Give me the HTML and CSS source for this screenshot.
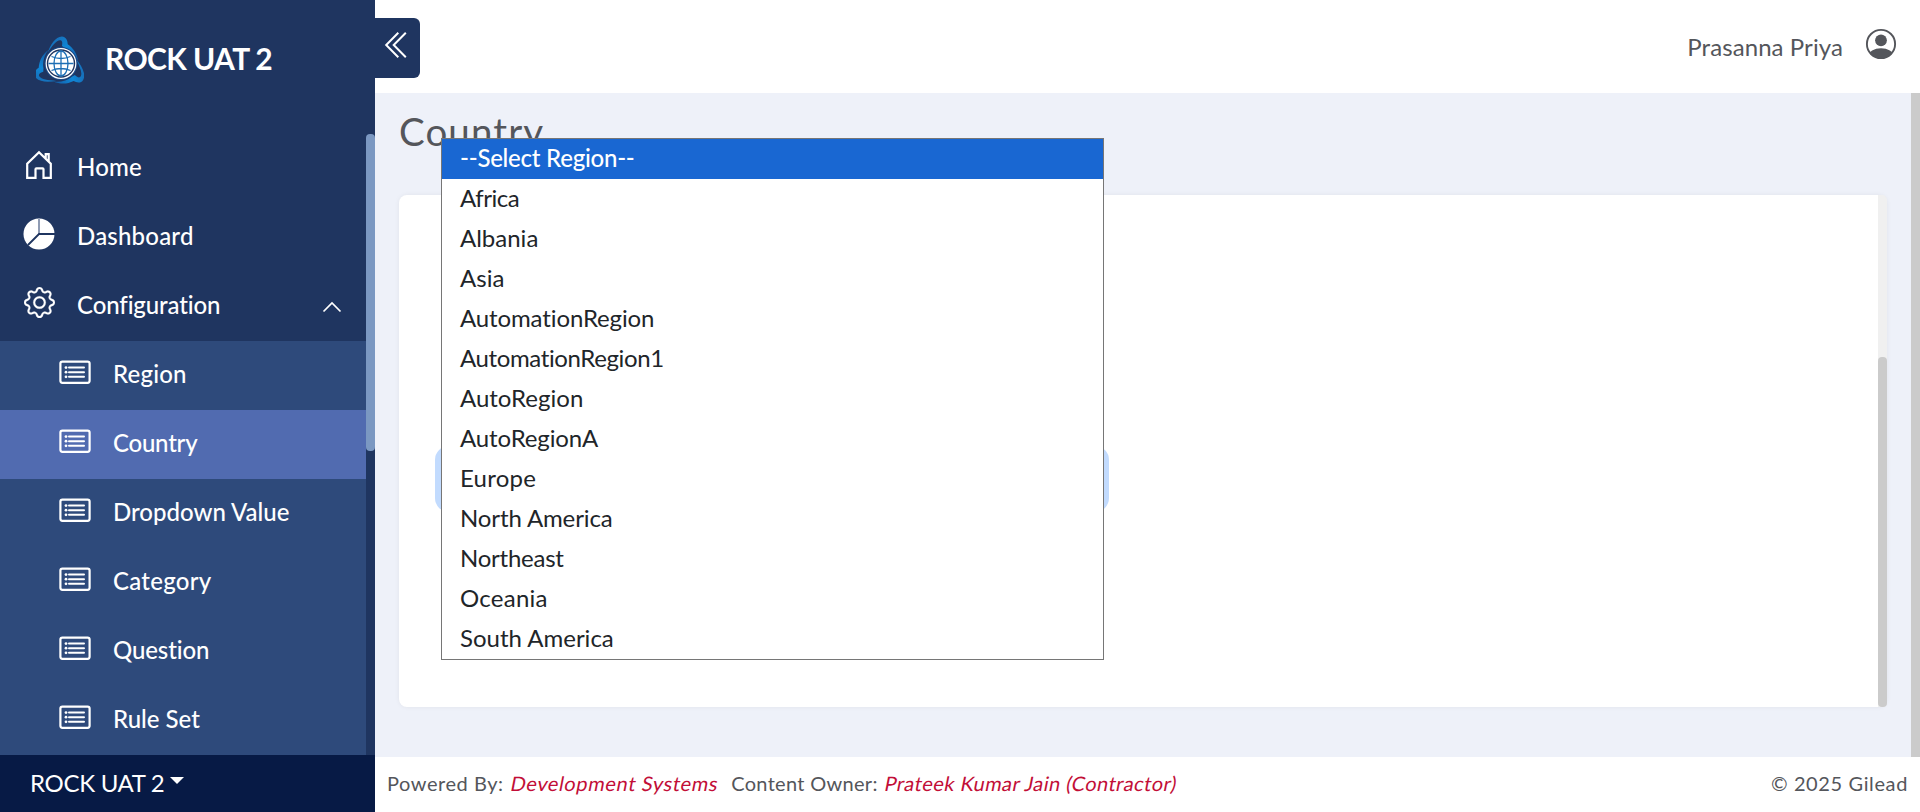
FILE: index.html
```html
<!DOCTYPE html>
<html lang="en">
<head>
<meta charset="utf-8">
<title>ROCK UAT 2 - Country</title>
<link rel="stylesheet" href="styles.css">
</head>
<body>
<svg width="0" height="0" class="sprite" aria-hidden="true">
  <symbol id="list" viewBox="0 0 32 24">
    <rect x="1.4" y="1.6" width="29.2" height="21.2" rx="2" fill="none" stroke="currentColor" stroke-width="2.2"/>
    <path d="M10 7.6h15M10 12.2h15M10 16.8h15" stroke="currentColor" stroke-width="2" stroke-linecap="round"/>
    <g fill="currentColor"><circle cx="7" cy="7.6" r="1.4"/><circle cx="7" cy="12.2" r="1.4"/><circle cx="7" cy="16.8" r="1.4"/></g>
  </symbol>
</svg>
<div class="app">
  <aside class="sidebar">
    <div class="brand">
      <svg class="brand-logo" viewBox="0 0 48 48">
        <defs>
          <linearGradient id="ga" x1="0" y1="0" x2="1" y2="1"><stop offset="0" stop-color="#1b62a8"/><stop offset=".5" stop-color="#0f86d6"/><stop offset="1" stop-color="#1558a0"/></linearGradient>
          <path id="blade" d="M12 17C15 9 20 0 27 0c4 0 6 4 6 8 6 4 10 10 11 18-3-7-8-12-14-14l-3-2c1-4 0-6-2-6-4 0-8 6-13 13z" fill="url(#ga)"/>
        </defs>
        <g transform="translate(0 .5) scale(.96)">
          <use href="#blade"/>
          <use href="#blade" transform="rotate(120 25 29)"/>
          <use href="#blade" transform="rotate(240 25 29)"/>
        </g>
        <circle cx="25" cy="27.500" r="16.500" fill="#1c4b8a"/>
        <circle cx="25" cy="27.500" r="14.800" fill="#1f3560" stroke="#fff" stroke-width="1.200"/>
        <circle cx="25" cy="27.500" r="12.800" fill="#fff"/>
        <g fill="none" stroke="#1d6fb5" stroke-width="1.300"><path d="M25 15v25M12.500 27.500h25M15.500 20.500q9.500 4 19 0M15.500 34.500q9.500-4 19 0"/><ellipse cx="25" cy="27.500" rx="7" ry="12.500"/></g>
      </svg>
      <span class="brand-name">ROCK UAT 2</span>
    </div>
    <div class="nav-scroll">
      <nav class="nav">
        <a class="nav-item">
          <svg class="nav-icon" viewBox="0 0 32 32" fill="none" stroke="#fff" stroke-width="2.200"><path d="M4.200 28.900V14.800L16 3.200l11.800 11.600v14.100h-7.300v-8.600q0-.9-.9-.9h-6.200q-.9 0-.9.900v8.600zM22.700 9.500V5.100h3v7.400"/></svg>
          <span class="wide">Home</span>
        </a>
        <a class="nav-item">
          <svg class="nav-icon" viewBox="0 0 32 32"><circle cx="16" cy="16" r="15.500" fill="#fff"/><path d="M16 0v16" stroke="#8f9bb3" stroke-width="2"/><path d="M15.500 16H32M16 16L5 27" stroke="#1f3560" stroke-width="1.800"/></svg>
          <span class="wide">Dashboard</span>
        </a>
        <a class="nav-item">
          <svg class="nav-icon gear" viewBox="0 0 16 16" fill="#fff" stroke="#fff" stroke-width=".12"><path d="M8 4.754a3.246 3.246 0 1 0 0 6.492 3.246 3.246 0 0 0 0-6.492zM5.754 8a2.246 2.246 0 1 1 4.492 0 2.246 2.246 0 0 1-4.492 0z"/><path d="M9.796 1.343c-.527-1.790-3.065-1.790-3.592 0l-.094.319a.873.873 0 0 1-1.255.520l-.292-.160c-1.640-.892-3.433.902-2.540 2.541l.159.292a.873.873 0 0 1-.520 1.255l-.319.094c-1.790.527-1.790 3.065 0 3.592l.319.094a.873.873 0 0 1 .520 1.255l-.160.292c-.892 1.640.901 3.434 2.541 2.540l.292-.159a.873.873 0 0 1 1.255.520l.094.319c.527 1.790 3.065 1.790 3.592 0l.094-.319a.873.873 0 0 1 1.255-.520l.292.160c1.640.893 3.434-.902 2.540-2.541l-.159-.292a.873.873 0 0 1 .520-1.255l.319-.094c1.790-.527 1.790-3.065 0-3.592l-.319-.094a.873.873 0 0 1-.520-1.255l.160-.292c.893-1.640-.902-3.433-2.541-2.540l-.292.159a.873.873 0 0 1-1.255-.520l-.094-.319zm-2.633.283c.246-.835 1.428-.835 1.674 0l.094.319a1.873 1.873 0 0 0 2.693 1.115l.291-.160c.764-.415 1.600.420 1.184 1.185l-.159.292a1.873 1.873 0 0 0 1.116 2.692l.318.094c.835.246.835 1.428 0 1.674l-.319.094a1.873 1.873 0 0 0-1.115 2.693l.160.291c.415.764-.420 1.600-1.185 1.184l-.291-.159a1.873 1.873 0 0 0-2.693 1.116l-.094.318c-.246.835-1.428.835-1.674 0l-.094-.319a1.873 1.873 0 0 0-2.692-1.115l-.292.160c-.764.415-1.600-.420-1.184-1.185l.159-.291A1.873 1.873 0 0 0 1.945 8.930l-.319-.094c-.835-.246-.835-1.428 0-1.674l.319-.094A1.873 1.873 0 0 0 3.060 4.377l-.160-.292c-.415-.764.420-1.600 1.185-1.184l.292.159a1.873 1.873 0 0 0 2.692-1.115l.094-.319z"/></svg>
          <span class="even">Configuration</span>
          <svg class="chevron" viewBox="0 0 20 12" fill="none" stroke="#fff" stroke-width="1.700"><path d="M1.500 10.500L10 2l8.500 8.500"/></svg>
        </a>
        <div class="subnav">
          <a class="nav-item sub"><svg class="list-icon"><use href="#list"/></svg><span class="wide">Region</span></a>
          <a class="nav-item sub active"><svg class="list-icon"><use href="#list"/></svg><span class="snug">Country</span></a>
          <a class="nav-item sub"><svg class="list-icon"><use href="#list"/></svg><span>Dropdown Value</span></a>
          <a class="nav-item sub"><svg class="list-icon"><use href="#list"/></svg><span class="slight">Category</span></a>
          <a class="nav-item sub"><svg class="list-icon"><use href="#list"/></svg><span class="even">Question</span></a>
          <a class="nav-item sub"><svg class="list-icon"><use href="#list"/></svg><span>Rule Set</span></a>
        </div>
      </nav>
      <div class="nav-track"><div class="nav-thumb"></div></div>
    </div>
    <div class="side-footer"><span>ROCK UAT 2</span><i class="caret"></i></div>
  </aside>
  <div class="main">
    <header class="topbar">
      <button class="toggle" aria-label="Collapse menu"><svg viewBox="0 0 24 28" fill="none" stroke="#fff" stroke-width="2"><path d="M14.300 1.800L2.200 14l12.100 12.200M21.800 1.800L9.700 14l12.100 12.200"/></svg></button>
      <div class="user">
        <span class="user-name">Prasanna Priya</span>
        <svg class="avatar" viewBox="0 0 32 32"><defs><clipPath id="disc"><circle cx="16" cy="16" r="14.500"/></clipPath></defs><circle cx="16" cy="16" r="14.100" fill="#fff" stroke="#54565b" stroke-width="1.900"/><circle cx="16" cy="12.300" r="5.900" fill="#54565b"/><ellipse cx="16" cy="28" rx="12.500" ry="7.800" fill="#54565b" clip-path="url(#disc)"/></svg>
      </div>
    </header>
    <div class="content-row">
      <main class="content">
        <h1 class="title">Country</h1>
        <section class="card">
          <div class="card-body">
            <div class="select">
              <ul class="menu">
                <li class="selected snug">--Select Region--</li>
                <li class="tight">Africa</li>
                <li>Albania</li>
                <li>Asia</li>
                <li class="even">AutomationRegion</li>
                <li class="fit">AutomationRegion1</li>
                <li>AutoRegion</li>
                <li class="even">AutoRegionA</li>
                <li class="slight">Europe</li>
                <li class="even">North America</li>
                <li class="snug">Northeast</li>
                <li class="slight">Oceania</li>
                <li>South America</li>
              </ul>
            </div>
          </div>
          <div class="card-track"><div class="card-thumb"></div></div>
        </section>
      </main>
      <div class="page-scroll"></div>
    </div>
    <footer class="footer">
      <div class="credits"><span>Powered By:</span><em class="dev">Development Systems</em><span class="owner">Content Owner:</span><em>Prateek Kumar Jain (Contractor)</em></div>
      <span class="copyright">© 2025 Gilead</span>
    </footer>
  </div>
</div>
</body>
</html>
```
FILE: styles.css
```css
* { box-sizing: border-box; }
body {
  margin: 0;
  font-family: Lato, "Liberation Sans", sans-serif;
  font-size: 24px;
  color: #54565b;
  font-variant-ligatures: none;
}
.sprite { display: none; }
.app { display: flex; height: 812px; overflow: hidden; }

/* letter fitting */
.wide { letter-spacing: .2px; }
.slight { letter-spacing: .25px; }
.even { letter-spacing: -.12px; }
.snug { letter-spacing: -.24px; }
.fit { letter-spacing: -.38px; }
.tight { letter-spacing: -.48px; }

/* sidebar */
.sidebar { width: 375px; flex: none; display: flex; flex-direction: column; background: #1f3560; color: #fff; }
.brand { height: 134px; display: flex; align-items: flex-start; padding: 36px 0 0 36px; gap: 21px; }
.brand-logo { width: 48px; height: 48px; }
.brand-name { font-size: 30px; font-weight: 700; line-height: 44px; letter-spacing: -.6px; }
.nav-scroll { height: 621px; display: flex; overflow: hidden; }
.nav { width: 366px; }
.nav-item { height: 69px; display: flex; align-items: center; padding: 0 24px 4px 23px; font-weight: 500; }
.nav-icon { width: 32px; height: 32px; flex: none; margin: -4px 22px 0 0; }
.gear { width: 31px; height: 31px; margin-left: .5px; margin-right: 22.5px; }
.chevron { width: 20px; height: 12px; margin: 5px 0 0 auto; }
.subnav { background: #2e4a7b; }
.sub { padding-left: 59px; }
.list-icon { width: 32px; height: 24px; margin: -4px 22px 0 0; }
.active { background: #516bb0; }
.nav-track { width: 9px; background: #1f3560; }
.nav-thumb { height: 317px; background: #7b98c2; border-radius: 4px; }
.side-footer { height: 57px; display: flex; align-items: center; gap: 5px; padding: 0 0 2px 30px; background: #071a45; letter-spacing: -.3px; }
.caret { border: 7px solid transparent; border-top-color: #fff; border-bottom: 0; margin-top: -4px; }

/* main column */
.main { flex: 1; display: flex; flex-direction: column; min-width: 0; }
.topbar { height: 93px; display: flex; justify-content: space-between; align-items: flex-start; background: #fff; }
.toggle { display: flex; align-items: flex-start; width: 45px; height: 60px; margin-top: 18px; padding: 13px 0 0 9px; border: 0; border-radius: 0 6px 6px 0; background: #1f3560; }
.toggle svg { flex: none; width: 24px; height: 28px; }
.user { display: flex; padding: 28px 23px 0 0; }
.user-name { line-height: 37px; letter-spacing: .08px; margin-right: 22px; }
.avatar { width: 32px; height: 32px; }
.content-row { height: 664px; display: flex; background: #eef1f9; }
.content { flex: 1; padding: 20px 24px 50px; display: flex; flex-direction: column; }
.page-scroll { width: 9px; background: #cbcbcb; }
.title { margin: 0; height: 82px; font-size: 38.5px; font-weight: 400; line-height: 37px; letter-spacing: 1.1px; }
.card { height: 512px; display: flex; background: #fff; border-radius: 8px; box-shadow: 0 0 5px rgba(0, 0, 0, .06); }
.card-body { flex: 1; padding: 257px 42px 0; }
.select { position: relative; width: 662px; height: 54px; border-radius: 8px; background: #fff; box-shadow: 0 0 0 6px #c2dbfe; }
.menu { position: absolute; left: 0; top: -314px; width: 663px; height: 522px; margin: 0; padding: 0; list-style: none; background: #fff; border: 1px solid #767676; color: #212529; }
.menu li { height: 40px; line-height: 37px; padding-left: 18px; }
.menu .selected { background: #1967d2; color: #fff; font-weight: 500; }
.card-track { width: 9px; background: #f0f0f0; border-radius: 0 5px 5px 0; padding-top: 162px; }
.card-thumb { height: 350px; background: #cbcbcb; border-radius: 4px; }

/* footer */
.footer { height: 55px; display: flex; justify-content: space-between; align-items: center; padding: 0 12px 4px; background: #fff; font-size: 20px; line-height: 24px; letter-spacing: .55px; }
.credits { display: flex; }
.credits em { color: #c20e37; margin-left: 7px; letter-spacing: .46px; font-style: normal; transform: skewX(-11deg); }
.credits .dev { letter-spacing: .64px; }
.credits .owner { margin-left: 13px; letter-spacing: .3px; }
.copyright { letter-spacing: .62px; }
```
